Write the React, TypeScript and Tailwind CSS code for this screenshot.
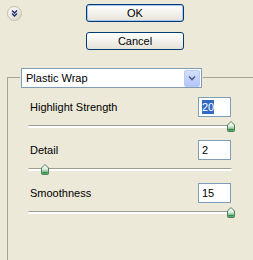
import React from 'react';

const rows = [
  { label: 'Highlight Strength', value: '20', pos: 199, selected: true },
  { label: 'Detail', value: '2', pos: 13, selected: false },
  { label: 'Smoothness', value: '15', pos: 199, selected: false },
];

function Thumb({ left }: { left: number }) {
  return (
    <svg
      className="absolute top-0"
      style={{ left }}
      width="8"
      height="11"
      viewBox="0 0 8 11"
    >
      <defs>
        <linearGradient id="thumbFill" x1="0" y1="0" x2="0" y2="1">
          <stop offset="0" stopColor="#ffffff" />
          <stop offset="0.45" stopColor="#dfeee0" />
          <stop offset="1" stopColor="#3f9a56" />
        </linearGradient>
      </defs>
      <path d="M4 0.5 L7.5 4 L7.5 9.5 Q7.5 10.5 6.5 10.5 L1.5 10.5 Q0.5 10.5 0.5 9.5 L0.5 4 Z" fill="url(#thumbFill)" stroke="#4f7e5f" />
      <path d="M1.5 8.5 L6.5 8.5" stroke="#2f8a45" strokeWidth="1.2" />
    </svg>
  );
}

function SliderRow({ label, value, pos, selected }: { label: string; value: string; pos: number; selected: boolean }) {
  return (
    <div className="flex flex-col">
      <div className="flex items-center justify-between">
        <span className="pl-[2px] leading-none">{label}</span>
        <div className="mr-[1px] flex h-[20px] w-[33px] items-center border border-[#7F9DB9] bg-white pl-[3px]">
          <span className={selected ? 'bg-[#316AC5] text-white leading-[14px]' : 'leading-[14px]'}>{value}</span>
        </div>
      </div>
      <div className="relative mt-[4px] h-[11px]">
        <div className="absolute left-0 right-0 top-[4px] h-[3px] rounded-full border-t border-[#9d9c90] bg-white"></div>
        <Thumb left={pos} />
      </div>
    </div>
  );
}

export default function App() {
  return (
    <div className="h-[260px] w-[253px] overflow-hidden bg-[#ECE9D8] font-['Liberation_Sans',Arial,sans-serif] text-[11px] text-black">
      {/* top buttons */}
      <div className="flex pt-[4px]">
        <div className="w-[86px] pl-[7px] pt-[2px]">
          <svg width="15" height="15" viewBox="0 0 15 15">
            <defs>
              <linearGradient id="circleFill" x1="0" y1="0" x2="1" y2="1">
                <stop offset="0" stopColor="#ffffff" />
                <stop offset="1" stopColor="#d6d2c4" />
              </linearGradient>
            </defs>
            <circle cx="7.5" cy="7.5" r="7" fill="url(#circleFill)" stroke="#c2bfb2" />
            <path d="M5 4.5 L7.5 7 L10 4.5 M5 7.5 L7.5 10 L10 7.5" fill="none" stroke="#1e2f6b" strokeWidth="1.4" />
          </svg>
        </div>
        <div className="flex flex-col gap-[10px]">
          <button className="flex h-[18px] w-[98px] items-center justify-center rounded-[3px] border border-[#003C74] bg-gradient-to-b from-white to-[#E6E3D8] shadow-[inset_0_0_0_1px_#a9c3f2]">
            OK
          </button>
          <button className="flex h-[18px] w-[98px] items-center justify-center rounded-[3px] border border-[#003C74] bg-gradient-to-b from-white to-[#E6E3D8]">
            Cancel
          </button>
        </div>
      </div>

      {/* group box */}
      <div className="ml-[7px] mt-[27px] h-[183px] border-l border-t border-[#a5a497]">
        <div className="-mt-[10px] ml-[12px] w-[183px] bg-[#ECE9D8] pl-[1px] pr-[1px]">
          <div className="flex h-[20px] w-[181px] items-center justify-between border border-[#7F9DB9] bg-white pl-[4px] pr-[1px]">
            <span>Plastic Wrap</span>
            <div className="flex h-[17px] w-[16px] items-center justify-center rounded-[2px] border border-[#B9CBF3] bg-gradient-to-b from-[#D2DEFB] to-[#B2C6F7]">
              <svg width="8" height="6" viewBox="0 0 8 6">
                <path d="M1 1.5 L4 4.5 L7 1.5" fill="none" stroke="#4D6185" strokeWidth="1.6" />
              </svg>
            </div>
          </div>
        </div>
        <div className="ml-[20px] mt-[9px] flex w-[204px] flex-col gap-[8px]">
          {rows.map((r) => (
            <SliderRow key={r.label} {...r} />
          ))}
        </div>
      </div>
    </div>
  );
}
